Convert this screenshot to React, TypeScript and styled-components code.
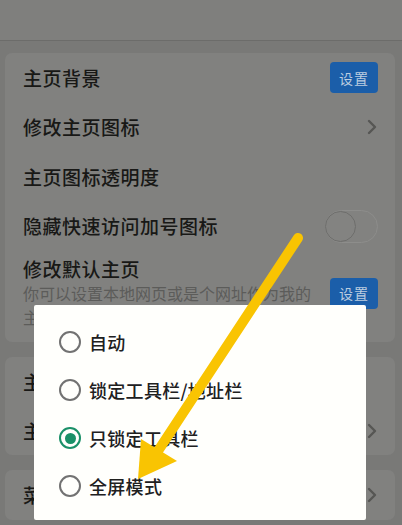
import React from "react";
import styled, { createGlobalStyle } from "styled-components";

const Global = createGlobalStyle`
  html, body { margin: 0; padding: 0; }
  body {
    width: 402px;
    height: 525px;
    overflow: hidden;
    background: #797977;
    font-family: "Noto Sans CJK SC", "Noto Sans", sans-serif;
  }
`;

const Page = styled.div`
  position: relative;
  width: 402px;
  height: 525px;
  overflow: hidden;
  background: #797977;
  display: flex;
  flex-direction: column;
`;

const Header = styled.div`
  height: 40px;
  flex: none;
  background: #7f7f7d;
  border-bottom: 1px solid #6c6c6a;
`;

const Content = styled.div`
  display: flex;
  flex-direction: column;
  gap: 15px;
  padding: 12px 7px 0 5px;
`;

const Card = styled.div`
  background: #81817f;
  border-radius: 7px;
  padding: 0 17px 0 18px;
  display: flex;
  flex-direction: column;
`;

const Row = styled.div<{ $h?: number }>`
  height: ${(p) => p.$h ?? 49.5}px;
  display: flex;
  align-items: center;
  justify-content: space-between;
`;

const Label = styled.div`
  font-size: 19px;
  font-weight: 500;
  letter-spacing: 0.5px;
  color: #181816;
  line-height: 24px;
  white-space: nowrap;
`;

const Block = styled.div`
  display: flex;
  align-items: center;
  gap: 12px;
  padding: 6px 0 13px;
`;

const BlockText = styled.div`
  flex: 1;
  display: flex;
  flex-direction: column;
`;

const Sub = styled.div`
  font-size: 16px;
  line-height: 24px;
  color: #5c5c5a;
`;

const Btn = styled.div`
  width: 48px;
  height: 31px;
  flex: none;
  border-radius: 4px;
  background: #1b5ea9;
  color: #bccde0;
  font-size: 14px;
  display: flex;
  align-items: center;
  justify-content: center;
  letter-spacing: 1px;
`;

const Chevron = () => (
  <svg width="12" height="18" viewBox="0 0 12 18">
    <path d="M3 3 L9 9 L3 15" fill="none" stroke="#565654" strokeWidth="2.4" strokeLinecap="round" strokeLinejoin="round" />
  </svg>
);

const Toggle = styled.div`
  width: 53px;
  height: 33px;
  box-sizing: border-box;
  border-radius: 17px;
  border: 1.5px solid #8d8d8b;
  background: #828280;
  display: flex;
  align-items: center;
`;

const Knob = styled.div`
  width: 31px;
  height: 31px;
  box-sizing: border-box;
  border-radius: 50%;
  border: 1.5px solid #6e6e6c;
  background: #838381;
  margin-left: -1px;
`;

const Dialog = styled.div`
  position: absolute;
  left: 34px;
  top: 305px;
  width: 332px;
  height: 215px;
  box-sizing: border-box;
  background: #fffffc;
  border-radius: 2px;
  padding: 13px 0 0 25px;
  display: flex;
  flex-direction: column;
`;

const Option = styled.div`
  height: 48px;
  display: flex;
  align-items: center;
  gap: 8px;
`;

const Radio = styled.div<{ $on?: boolean }>`
  width: 22px;
  height: 22px;
  box-sizing: border-box;
  border-radius: 50%;
  border: 2.5px solid ${(p) => (p.$on ? "#1a9068" : "#727272")};
  display: flex;
  align-items: center;
  justify-content: center;
  &::after {
    content: "";
    display: ${(p) => (p.$on ? "block" : "none")};
    width: 11px;
    height: 11px;
    border-radius: 50%;
    background: #1a9068;
  }
`;

const OptText = styled.div`
  font-size: 18px;
  font-weight: 500;
  color: #20201e;
  letter-spacing: 0.3px;
`;

const Arrow = styled.svg`
  position: absolute;
  left: 0;
  top: 0;
  pointer-events: none;
`;

const options = ["自动", "锁定工具栏/地址栏", "只锁定工具栏", "全屏模式"];

export default function App() {
  return (
    <Page>
      <Global />
      <Header />
      <Content>
        <Card>
          <Row>
            <Label>主页背景</Label>
            <Btn>设置</Btn>
          </Row>
          <Row>
            <Label>修改主页图标</Label>
            <Chevron />
          </Row>
          <Row>
            <Label>主页图标透明度</Label>
          </Row>
          <Row>
            <Label>隐藏快速访问加号图标</Label>
            <Toggle>
              <Knob />
            </Toggle>
          </Row>
          <Block>
            <BlockText>
              <Label>修改默认主页</Label>
              <Sub>你可以设置本地网页或是个网址作为我的主页</Sub>
            </BlockText>
            <Btn>设置</Btn>
          </Block>
        </Card>
        <Card>
          <Row $h={49}>
            <Label>主页布局</Label>
          </Row>
          <Row $h={49}>
            <Label>主页搜索引擎</Label>
            <Chevron />
          </Row>
        </Card>
        <Card>
          <Row $h={50}>
            <Label>菜单设置</Label>
            <Chevron />
          </Row>
        </Card>
      </Content>
      <Dialog>
        {options.map((o, i) => (
          <Option key={o}>
            <Radio $on={i === 2} />
            <OptText>{o}</OptText>
          </Option>
        ))}
      </Dialog>
      <Arrow width="402" height="525" viewBox="0 0 402 525">
        <line x1="298" y1="238" x2="156" y2="454" stroke="#f9c402" strokeWidth="10" strokeLinecap="round" />
        <polygon points="141,439 177,461 138,479" fill="#f9c402" />
      </Arrow>
    </Page>
  );
}
